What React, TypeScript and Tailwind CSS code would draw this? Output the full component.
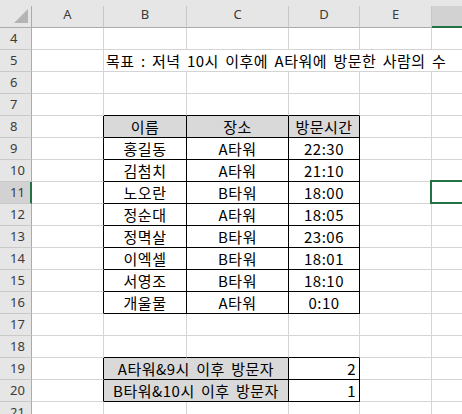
import React from "react";

const GREEN = "#217346";

const WIDTHS = ["w-[72px]", "w-[83px]", "w-[102px]", "w-[71px]", "w-[72px]", "flex-1"];
const LETTERS = ["A", "B", "C", "D", "E", ""];

const visits = [
  ["이름", "장소", "방문시간"],
  ["홍길동", "A타워", "22:30"],
  ["김첨치", "A타워", "21:10"],
  ["노오란", "B타워", "18:00"],
  ["정순대", "A타워", "18:05"],
  ["정멱살", "B타워", "23:06"],
  ["이엑셀", "B타워", "18:01"],
  ["서영조", "B타워", "18:10"],
  ["개울물", "A타워", "0:10"],
];

const summary = [
  ["A타워&9시 이후 방문자", "2"],
  ["B타워&10시 이후 방문자", "1"],
];

type Edge = "grid" | "black" | "none";

function rightCls(e: Edge) {
  if (e === "black") return "border-r border-r-black";
  if (e === "grid") return "border-r border-r-[#d4d4d4]";
  return "";
}

function bottomCls(e: Edge) {
  if (e === "black") return "border-b border-b-black";
  if (e === "grid") return "border-b border-b-[#d4d4d4]";
  return "";
}

function Cell({
  width,
  right = "grid",
  bottom = "grid",
  fill,
  align = "center",
  children,
}: {
  width: string;
  right?: Edge;
  bottom?: Edge;
  fill?: boolean;
  align?: "left" | "center" | "right";
  children?: React.ReactNode;
}) {
  const alignCls =
    align === "left" ? "justify-start pl-[2px]" : align === "right" ? "justify-end pr-[3px]" : "justify-center";
  return (
    <div
      className={`flex h-full shrink-0 items-center whitespace-nowrap leading-none tracking-[0.5px] [word-spacing:2.5px] ${width} ${rightCls(right)} ${bottomCls(bottom)} ${alignCls} ${fill ? "bg-[#d9d9d9]" : ""}`}
    >
      {children}
    </div>
  );
}

function RowHeader({ n }: { n: number }) {
  const selected = n === 11;
  return (
    <div
      className={`flex h-full w-[32px] shrink-0 items-center pl-[10px] font-['Noto_Sans',sans-serif] text-[13px] leading-none text-[#3b3b3b] border-b border-b-[#c9c9c9] ${
        selected ? "bg-[#d2d2d2] border-r-2 border-r-[#217346]" : "bg-[#e6e6e6] border-r border-r-[#ababab]"
      }`}
    >
      {n}
    </div>
  );
}

function SheetRow({ n }: { n: number }) {
  const inTable = (n >= 8 && n <= 16) || n === 19 || n === 20;
  const aboveTable = n === 7 || n === 18;

  if (n === 5) {
    return (
      <div className="flex h-[22px]">
        <RowHeader n={n} />
        <Cell width={WIDTHS[0]} />
        <Cell width="flex-1" right="none" align="left">
          목표 : 저녁 10시 이후에 A타워에 방문한 사람의 수
        </Cell>
      </div>
    );
  }

  if (n === 19 || n === 20) {
    const [label, count] = summary[n - 19];
    return (
      <div className="flex h-[22px]">
        <RowHeader n={n} />
        <Cell width={WIDTHS[0]} right="black" />
        <Cell width="w-[185px]" right="black" bottom="black" fill>
          {label}
        </Cell>
        <Cell width={WIDTHS[3]} right="black" bottom="black" align="right">
          {count}
        </Cell>
        <Cell width={WIDTHS[4]} />
        <Cell width={WIDTHS[5]} right="none" />
      </div>
    );
  }

  const data = n >= 8 && n <= 16 ? visits[n - 8] : null;

  return (
    <div className="flex h-[22px]">
      <RowHeader n={n} />
      {WIDTHS.map((w, i) => {
        const isTableCol = i >= 1 && i <= 3;
        const right: Edge = i === 5 ? "none" : inTable && i <= 3 ? "black" : "grid";
        const bottom: Edge = isTableCol && (inTable || aboveTable) ? "black" : "grid";
        return (
          <Cell key={i} width={w} right={right} bottom={bottom} fill={n === 8 && isTableCol}>
            {data && isTableCol ? data[i - 1] : null}
          </Cell>
        );
      })}
    </div>
  );
}

export default function App() {
  const rows = Array.from({ length: 18 }, (_, i) => i + 4);
  return (
    <div className="relative h-[414px] w-[462px] overflow-hidden bg-white font-['Noto_Sans_CJK_KR',sans-serif] text-[15px] text-black">
      {/* column headers */}
      <div className="flex h-[28px] items-end bg-[#e6e6e6]">
        <div className="flex h-[22px] w-[32px] shrink-0 items-end justify-end border-r border-b border-r-[#ababab] border-b-[#ababab] pr-[3px] pb-[4px]">
          <svg width="14" height="14" viewBox="0 0 14 14">
            <polygon points="14,0 14,14 0,14" fill="#b4b4b4" />
          </svg>
        </div>
        {WIDTHS.map((w, i) =>
          i === 5 ? (
            <div key={i} className="h-[22px] flex-1 border-b-2 border-b-[#217346] bg-[#d2d2d2]" />
          ) : (
            <div
              key={i}
              className={`flex h-[22px] shrink-0 items-center justify-center border-r border-b border-r-[#c6c6c6] border-b-[#ababab] pb-[5px] font-['Noto_Sans',sans-serif] text-[13px] leading-none text-[#3b3b3b] ${w}`}
            >
              {LETTERS[i]}
            </div>
          )
        )}
      </div>

      {rows.map((n) => (
        <SheetRow key={n} n={n} />
      ))}

      {/* active cell F11 */}
      <div className="absolute left-[430px] top-[180px] h-[24px] w-[40px] border-2" style={{ borderColor: GREEN }} />
    </div>
  );
}
